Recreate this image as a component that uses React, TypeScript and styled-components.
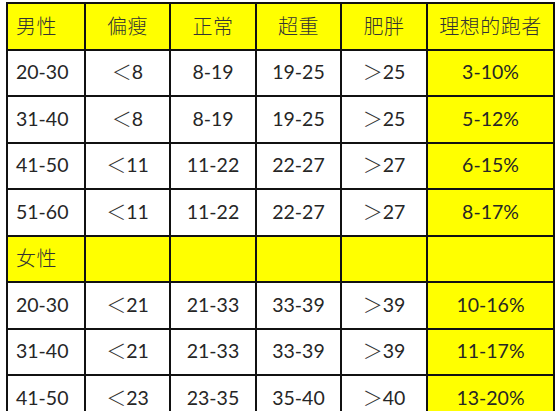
import React from "react";
import styled, { createGlobalStyle } from "styled-components";

const Global = createGlobalStyle`
  html, body { margin: 0; padding: 0; background: #ffffff; }
  body { overflow: hidden; }
`;

const Page = styled.div`
  width: 557px;
  height: 411px;
  overflow: hidden;
  padding: 2px 0 0 6px;
  box-sizing: border-box;
  background: #fff;
`;

const Grid = styled.div`
  display: grid;
  grid-template-columns: 78px 85px 86px 85px 86px 127px;
  grid-auto-rows: 46.5px;
  border-top: 2px solid #111;
  border-left: 2px solid #111;
  width: max-content;
  font-family: Lato, "Noto Sans CJK SC", sans-serif;
  font-size: 19.5px;
  color: #262626;
`;

const Cell = styled.div<{ $yellow?: boolean; $left?: boolean }>`
  display: flex;
  align-items: center;
  justify-content: ${(p) => (p.$left ? "flex-start" : "center")};
  padding: 0 0 2px ${(p) => (p.$left ? "8px" : "0")};
  box-sizing: border-box;
  border-right: 2px solid #111;
  border-bottom: 2px solid #111;
  background: ${(p) => (p.$yellow ? "#ffff00" : "#ffffff")};
  white-space: nowrap;
`;

const Cjk = styled.span`
  font-family: "Noto Sans CJK SC", sans-serif;
  font-weight: 300;
  font-size: 20px;
  color: #333;
  letter-spacing: 0.5px;
`;

const Sign = styled.span`
  font-family: "Noto Sans CJK SC", sans-serif;
  font-weight: 300;
  font-size: 20px;
  color: #333;
`;

const header = ["男性", "偏瘦", "正常", "超重", "肥胖", "理想的跑者"];

const male = [
  ["20-30", "＜8", "8-19", "19-25", "＞25", "3-10%"],
  ["31-40", "＜8", "8-19", "19-25", "＞25", "5-12%"],
  ["41-50", "＜11", "11-22", "22-27", "＞27", "6-15%"],
  ["51-60", "＜11", "11-22", "22-27", "＞27", "8-17%"],
];

const female = [
  ["20-30", "＜21", "21-33", "33-39", "＞39", "10-16%"],
  ["31-40", "＜21", "21-33", "33-39", "＞39", "11-17%"],
  ["41-50", "＜23", "23-35", "35-40", "＞40", "13-20%"],
];

function Value({ v }: { v: string }) {
  const first = v.charAt(0);
  if (first === "＜" || first === "＞") {
    return (
      <>
        <Sign>{first}</Sign>
        {v.slice(1)}
      </>
    );
  }
  return <>{v}</>;
}

function DataRow({ row }: { row: string[] }) {
  return (
    <>
      {row.map((v, i) => (
        <Cell key={i} $left={i === 0} $yellow={i === 5}>
          <Value v={v} />
        </Cell>
      ))}
    </>
  );
}

export default function App() {
  return (
    <Page>
      <Global />
      <Grid>
        {header.map((h, i) => (
          <Cell key={h} $yellow $left={i === 0}>
            <Cjk>{h}</Cjk>
          </Cell>
        ))}
        {male.map((r, i) => (
          <DataRow key={"m" + i} row={r} />
        ))}
        {[0, 1, 2, 3, 4, 5].map((i) => (
          <Cell key={"f" + i} $yellow $left={i === 0}>
            {i === 0 ? <Cjk>女性</Cjk> : null}
          </Cell>
        ))}
        {female.map((r, i) => (
          <DataRow key={"w" + i} row={r} />
        ))}
      </Grid>
    </Page>
  );
}
